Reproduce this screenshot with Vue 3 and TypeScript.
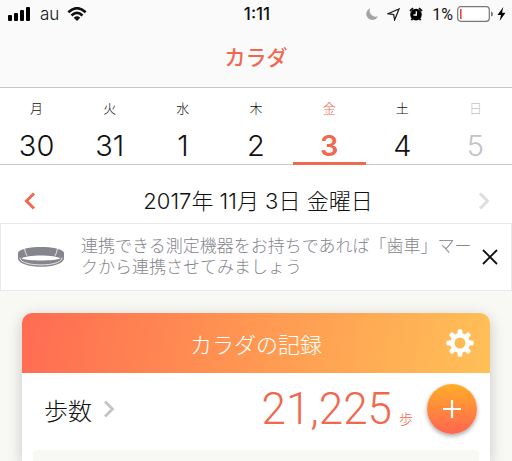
<script setup lang="ts">
import { ref } from 'vue'

interface Day {
  label: string
  date: number
  future?: boolean
}

const days: Day[] = [
  { label: '月', date: 30 },
  { label: '火', date: 31 },
  { label: '水', date: 1 },
  { label: '木', date: 2 },
  { label: '金', date: 3 },
  { label: '土', date: 4 },
  { label: '日', date: 5, future: true },
]

const selected = ref(4)
const noticeOpen = ref(true)
const steps = 21225
const teeth = [0, 45, 90, 135, 180, 225, 270, 315]
</script>

<template>
  <div class="app">
    <header class="top">
      <div class="status">
        <div class="status-side">
          <svg class="signal" viewBox="0 0 23 14" aria-hidden="true">
            <rect x="0" y="8" width="4" height="6" rx="1" />
            <rect x="6" y="6" width="4" height="8" rx="1" />
            <rect x="12" y="3" width="4" height="11" rx="1" />
            <rect x="18" y="0" width="4" height="14" rx="1" />
          </svg>
          <span class="carrier">au</span>
          <svg class="wifi" viewBox="0 0 20 14" aria-hidden="true">
            <path d="M1.3 5.2 Q10 -2.8 18.7 5.2" />
            <path d="M4.5 8.5 Q10 3.3 15.5 8.5" />
            <path class="solid" d="M10 14 L6.7 10.7 Q10 7.8 13.3 10.7 Z" />
          </svg>
        </div>
        <span class="clock">1:11</span>
        <div class="status-side end">
          <svg class="moon" viewBox="0 0 12 12" aria-hidden="true">
            <path d="M4.2 0.3 A6 6 0 1 0 11.8 8.3 A6 6 0 0 1 4.2 0.3 Z" />
          </svg>
          <svg class="arrow" viewBox="0 0 13 13" aria-hidden="true">
            <path d="M12 1 L7.6 12 L6.7 6.5 L1 5.7 Z" />
          </svg>
          <svg class="alarm" viewBox="0 0 14 14" aria-hidden="true">
            <circle cx="7" cy="7.6" r="5.8" />
            <path class="bell" d="M1 4 L4 1.2 M13 4 L10 1.2 M3.3 11.8 L2.4 13.2 M10.7 11.8 L11.6 13.2" />
            <path class="hand" d="M7.3 4.2 V8 H4.5" />
          </svg>
          <span class="percent">1%</span>
          <svg class="battery" viewBox="0 0 36 16" aria-hidden="true">
            <rect class="shell" x="0.7" y="0.7" width="31.6" height="14.6" rx="3" />
            <rect class="level" x="3" y="3" width="1.6" height="10" />
            <path class="tip" d="M34 5.5 Q36 6 36 8 T34 10.5 Z" />
          </svg>
          <svg class="bolt" viewBox="0 0 9 14" aria-hidden="true">
            <path d="M6.3 0 L0.5 8 H4 L2.6 14 L8.5 5.7 H5 Z" />
          </svg>
        </div>
      </div>
      <h1>カラダ</h1>
    </header>

    <nav class="week" aria-label="週">
      <button
        v-for="(day, i) in days"
        :key="day.date"
        type="button"
        class="day"
        :class="{ active: i === selected, future: day.future }"
        :disabled="day.future"
        @click="selected = i"
      >
        <span class="weekday">{{ day.label }}</span>
        <span class="number">{{ day.date }}</span>
      </button>
    </nav>

    <div class="date-row">
      <button type="button" class="step" aria-label="前の日">
        <svg viewBox="0 0 12 18"><path d="M10 1.5 L2.5 9 L10 16.5" /></svg>
      </button>
      <h2>2017年 11月 3日 金曜日</h2>
      <button type="button" class="step next" aria-label="次の日">
        <svg viewBox="0 0 12 18"><path d="M2 1.5 L9.5 9 L2 16.5" /></svg>
      </button>
    </div>

    <section v-if="noticeOpen" class="notice">
      <svg class="band" viewBox="0 0 48 22" aria-hidden="true">
        <path
          class="body"
          d="M1 6.5 C5 -0.8 43 -0.8 47 6.5 V13 C44 23.4 4 23.4 1 13 Z"
        />
        <path class="hole" d="M4.5 12.6 C9 8.6 39 8.6 43.5 12.6 C38 15.2 10 15.2 4.5 12.6 Z" />
        <path class="seam" d="M3 11.5 C2 21.4 46 21.4 45 11.5" />
        <path class="seam" d="M7.6 2.5 Q8 6.5 10 9.8 M40.4 2.5 Q40 6.5 38 9.8" />
      </svg>
      <p>連携できる測定機器をお持ちであれば「歯車」マークから連携させてみましょう</p>
      <button type="button" class="close" aria-label="閉じる" @click="noticeOpen = false">
        <svg viewBox="0 0 16 16"><path d="M1 1 L15 15 M15 1 L1 15" /></svg>
      </button>
    </section>

    <main>
      <section class="card">
        <div class="card-head">
          <h3>カラダの記録</h3>
          <button type="button" class="gear" aria-label="設定">
            <svg viewBox="-14 -14 28 28">
              <rect
                v-for="angle in teeth"
                :key="angle"
                x="-2.4"
                y="-13.7"
                width="4.8"
                height="7"
                rx="1.6"
                :transform="`rotate(${angle})`"
              />
              <circle r="7.7" />
            </svg>
          </button>
        </div>
        <div class="steps">
          <a href="#steps" class="steps-link">
            歩数
            <svg viewBox="0 0 12 18" aria-hidden="true"><path d="M2 1.5 L9.5 9 L2 16.5" /></svg>
          </a>
          <div class="count">
            <span class="value">{{ steps.toLocaleString('en-US') }}</span>
            <span class="unit">歩</span>
          </div>
          <button type="button" class="add" aria-label="歩数を追加">
            <svg viewBox="0 0 18 18"><path d="M9 0 V18 M0 9 H18" /></svg>
          </button>
        </div>
        <div class="panel"></div>
      </section>
    </main>
  </div>
</template>

<style>
body {
  background: #f8f8f5;
}
</style>

<style scoped>
.app {
  display: flex;
  flex-direction: column;
  min-height: 100vh;
  font-family: Inter, "Noto Sans CJK JP", sans-serif;
  font-weight: 300;
  color: #111;
}

.app * {
  box-sizing: border-box;
}

h1,
h2,
h3,
p {
  margin: 0;
}

button {
  padding: 0;
  border: 0;
  background: none;
  font: inherit;
  color: inherit;
  cursor: pointer;
}

svg {
  display: block;
  flex: none;
}

.top {
  height: 88px;
  background: #fafafa;
  border-bottom: 1px solid #c6c6c8;
}

.status {
  display: grid;
  grid-template-columns: 1fr auto 1fr;
  align-items: center;
  height: 28px;
  padding: 0 6px 0 8px;
  font-size: 17px;
}

.status-side {
  display: flex;
  align-items: center;
}

.end {
  justify-content: flex-end;
}

.signal {
  width: 23px;
  height: 14px;
}

.carrier {
  margin: 0 8px 0 9px;
}

.wifi {
  width: 20px;
  height: 14px;
}

.wifi path {
  fill: none;
  stroke: #111;
  stroke-width: 2.6;
}

.wifi .solid {
  fill: #111;
  stroke: none;
}

.clock {
  font-weight: 500;
}

.moon {
  width: 12px;
  height: 12px;
  margin-right: 9px;
  fill: #a4a4a4;
}

.arrow {
  width: 13px;
  height: 13px;
  margin-right: 9px;
  fill: none;
  stroke: #222;
  stroke-width: 1.3;
}

.alarm {
  width: 14px;
  height: 14px;
  margin-right: 9px;
}

.bell {
  stroke: #111;
  stroke-width: 1.8;
}

.hand {
  fill: none;
  stroke: #fff;
  stroke-width: 1.3;
}

.percent {
  margin-right: 4px;
  font-family: Roboto, sans-serif;
  font-size: 16px;
  font-weight: 400;
}

.battery {
  width: 36px;
  height: 16px;
  margin-right: 4px;
}

.shell {
  fill: #fff;
  stroke: #777;
  stroke-width: 1.2;
}

.level {
  fill: #e8493f;
}

.tip {
  fill: #777;
}

.bolt {
  width: 9px;
  height: 14px;
}

h1 {
  font-size: 21px;
  font-weight: 500;
  line-height: 60px;
  text-align: center;
  color: #f0694f;
}

.week {
  display: grid;
  grid-template-columns: repeat(7, 1fr);
  height: 77px;
  background: #fff;
  border-bottom: 1px solid #c6c6c8;
}

.day {
  display: flex;
  flex-direction: column;
  align-items: center;
  margin-bottom: -1px;
  padding-top: 10px;
  border-bottom: 3px solid transparent;
}

.weekday {
  font-size: 13px;
  line-height: 20px;
}

.number {
  margin-top: 13px;
  font-size: 29px;
  font-weight: 350;
  line-height: 30px;
}

.active {
  color: #f0694f;
  border-color: #f0694f;
}

.active .number {
  font-weight: 600;
}

.future {
  color: #c3c3c8;
}

.date-row {
  display: flex;
  align-items: center;
  justify-content: space-between;
  height: 58px;
  padding: 14px 20px 0;
  background: #fff;
}

h2 {
  font-size: 22px;
  font-weight: 300;
  line-height: 28px;
}

.step svg {
  width: 12px;
  height: 18px;
  margin: 0 4px;
  fill: none;
  stroke: #f0694f;
  stroke-width: 3;
}

.next svg {
  margin: 0 2px;
  stroke: #dedee2;
}

.notice {
  display: flex;
  align-items: center;
  min-height: 68px;
  padding: 0 13px 0 16px;
  background: #fff;
  border: 1px solid #e9e9ee;
}

.band {
  width: 48px;
  height: 22px;
}

.body {
  fill: #85858d;
}

.hole {
  fill: #fff;
}

.seam {
  fill: none;
  stroke: #fff;
  stroke-width: 0.8;
}

.notice p {
  flex: 1;
  margin: 0 6px 0 16px;
  font-size: 17px;
  line-height: 21px;
  color: #85858c;
}

.close svg {
  width: 16px;
  height: 16px;
  stroke: #111;
  stroke-width: 1.8;
}

main {
  display: flex;
  flex: 1;
  flex-direction: column;
  padding: 22px 22px 0;
}

.card {
  display: flex;
  flex: 1;
  flex-direction: column;
  background: #fff;
  border-radius: 10px 10px 0 0;
  box-shadow: 0 4px 16px rgba(0, 0, 0, 0.2);
}

.card-head {
  display: grid;
  grid-template-columns: 1fr auto 1fr;
  align-items: center;
  height: 60px;
  padding: 0 16px;
  color: #fff;
  background: linear-gradient(100deg, #ff6b52, #ff9852 50%, #ffc057);
  border-radius: 10px 10px 0 0;
}

h3 {
  grid-column: 2;
  font-size: 22px;
  font-weight: 300;
}

.gear {
  justify-self: end;
}

.gear svg {
  width: 28px;
  height: 28px;
  fill: #fff;
}

.gear circle {
  fill: none;
  stroke: #fff;
  stroke-width: 4.4;
}

.steps {
  display: flex;
  align-items: center;
  height: 77px;
  padding: 0 13px 5px 22px;
}

.steps-link {
  display: flex;
  align-items: center;
  gap: 11px;
  font-size: 24px;
  color: inherit;
  text-decoration: none;
}

.steps-link svg {
  width: 12px;
  height: 18px;
  fill: none;
  stroke: #c4c4c8;
  stroke-width: 2.8;
}

.count {
  display: flex;
  align-items: baseline;
  justify-content: flex-end;
  flex: 1;
  gap: 7px;
  margin-right: 14px;
  color: #f0694f;
}

.value {
  font-family: Roboto, sans-serif;
  font-size: 44px;
  font-weight: 350;
  line-height: 52px;
}

.unit {
  font-size: 14px;
}

.add {
  display: grid;
  place-items: center;
  width: 50px;
  height: 50px;
  border-radius: 50%;
  background: linear-gradient(#ffad28, #ff6550);
  box-shadow: 0 2px 4px rgba(0, 0, 0, 0.35);
}

.add svg {
  width: 18px;
  height: 18px;
  stroke: #fff;
  stroke-width: 2.2;
}

.panel {
  flex: 1;
  min-height: 10px;
  margin: 0 11px;
  background: #f8f8f5;
  border-radius: 4px 4px 0 0;
}
</style>
